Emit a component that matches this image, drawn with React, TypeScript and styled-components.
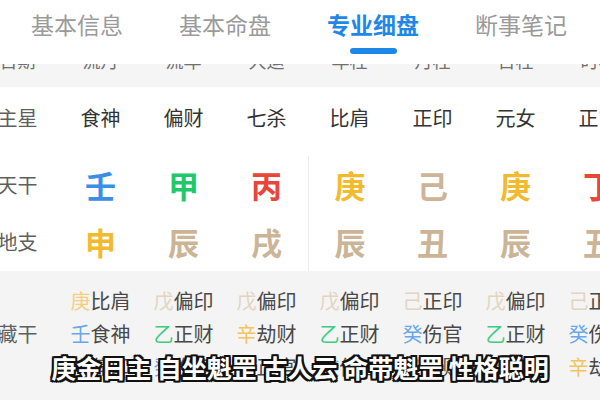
import React from "react";
import styled, { createGlobalStyle } from "styled-components";

const GlobalStyle = createGlobalStyle`
  html, body {
    margin: 0;
    padding: 0;
    background: #ffffff;
  }
  body {
    font-family: "Noto Sans CJK SC", "Noto Sans", sans-serif;
  }
`;

const Screen = styled.div`
  position: relative;
  width: 600px;
  height: 400px;
  overflow: hidden;
  background: #ffffff;
`;

const TabBar = styled.div`
  display: flex;
  height: 64px;
  padding-left: 3px;
  background: #ffffff;
`;

const Tab = styled.div<{ $active?: boolean }>`
  width: 148px;
  display: flex;
  flex-direction: column;
  align-items: center;
  padding-top: 8px;
  font-size: 23px;
  line-height: 32px;
  font-weight: ${(p) => (p.$active ? 700 : 400)};
  color: ${(p) => (p.$active ? "#1e88e8" : "#9a9a9a")};
`;

const TabLine = styled.div`
  width: 47px;
  height: 6px;
  margin-top: 8px;
  border-radius: 3px;
  background: #1e88e8;
`;

const Table = styled.div`
  margin-left: -24px;
  width: 664px;
`;

const Row = styled.div<{ $h: number; $pt?: number }>`
  display: grid;
  grid-template-columns: repeat(8, 83px);
  height: ${(p) => p.$h}px;
  padding-top: ${(p) => p.$pt ?? 0}px;
  box-sizing: border-box;
  align-items: center;
`;

const ClippedRow = styled.div`
  display: grid;
  grid-template-columns: repeat(8, 83px);
  height: 23px;
  overflow: hidden;
  background: #f5f5f5;
`;

const ClippedText = styled.div`
  margin-top: -14px;
  text-align: center;
  font-size: 18px;
  line-height: 20px;
  color: #707070;
`;

const Label = styled.div`
  text-align: center;
  font-size: 20px;
  color: #5f5f5f;
`;

const Star = styled.div`
  text-align: center;
  font-size: 20px;
  color: #333333;
`;

const Pillar = styled.div<{ $color: string; $divider?: boolean }>`
  height: 100%;
  display: flex;
  align-items: center;
  justify-content: center;
  font-size: 31px;
  font-weight: 700;
  color: ${(p) => p.$color};
  border-left: ${(p) => (p.$divider ? "1px solid #ececec" : "none")};
`;

const Hidden = styled.div`
  background: #f4f4f4;
  padding-top: 13px;
  height: 130px;
  box-sizing: border-box;
`;

const HiddenGrid = styled.div`
  display: grid;
  grid-template-columns: repeat(8, 83px);
  grid-auto-rows: 33px;
  align-items: center;
`;

const HiddenLabel = styled(Label)`
  grid-row: 2;
  grid-column: 1;
`;

const HiddenCell = styled.div`
  text-align: center;
  font-size: 20px;
  color: #484848;
  white-space: nowrap;
`;

const Stem = styled.span<{ $color: string }>`
  color: ${(p) => p.$color};
`;

const Subtitle = styled.div`
  position: absolute;
  left: 0;
  right: 0;
  bottom: 17px;
  text-align: center;
  font-size: 25px;
  font-weight: 700;
  line-height: 32px;
  color: #ffffff;
  text-shadow: -2px -2px 0 #111, 2px -2px 0 #111, -2px 2px 0 #111,
    2px 2px 0 #111, 0 -2px 0 #111, 0 2px 0 #111, -2px 0 0 #111,
    2px 0 0 #111;
`;

const STRONG: Record<string, string> = {
  壬: "#3a8ee6",
  癸: "#3a8ee6",
  甲: "#1fc86a",
  乙: "#1fc86a",
  丙: "#e8463a",
  丁: "#e8463a",
  庚: "#f2bb2f",
  辛: "#f2bb2f",
  申: "#f2bb2f",
  己: "#ccb596",
  戊: "#ccb596",
  辰: "#ccb596",
  戌: "#ccb596",
  丑: "#ccb596",
};

const SOFT: Record<string, string> = {
  庚: "#f4d07c",
  辛: "#f3c45e",
  戊: "#e3d4c0",
  己: "#e3d4c0",
  壬: "#68a7ec",
  癸: "#68a7ec",
  乙: "#3ccd82",
  丁: "#ee6a60",
};

interface Column {
  head: string;
  star: string;
  stem: string;
  branch: string;
  hidden: [string, string][];
}

const columns: Column[] = [
  { head: "流月", star: "食神", stem: "壬", branch: "申", hidden: [["庚", "比肩"], ["壬", "食神"], ["戊", "偏印"]] },
  { head: "流年", star: "偏财", stem: "甲", branch: "辰", hidden: [["戊", "偏印"], ["乙", "正财"], ["癸", "伤官"]] },
  { head: "大运", star: "七杀", stem: "丙", branch: "戌", hidden: [["戊", "偏印"], ["辛", "劫财"], ["丁", "正官"]] },
  { head: "年柱", star: "比肩", stem: "庚", branch: "辰", hidden: [["戊", "偏印"], ["乙", "正财"], ["癸", "伤官"]] },
  { head: "月柱", star: "正印", stem: "己", branch: "丑", hidden: [["己", "正印"], ["癸", "伤官"], ["辛", "劫财"]] },
  { head: "日柱", star: "元女", stem: "庚", branch: "辰", hidden: [["戊", "偏印"], ["乙", "正财"], ["癸", "伤官"]] },
  { head: "时柱", star: "正官", stem: "丁", branch: "丑", hidden: [["己", "正印"], ["癸", "伤官"], ["辛", "劫财"]] },
];

const tabs = ["基本信息", "基本命盘", "专业细盘", "断事笔记"];

const App = () => {
  return (
    <Screen>
      <GlobalStyle />
      <TabBar>
        {tabs.map((t, i) => (
          <Tab key={t} $active={i === 2}>
            {t}
            {i === 2 && <TabLine />}
          </Tab>
        ))}
      </TabBar>
      <Table>
        <ClippedRow>
          <ClippedText>日期</ClippedText>
          {columns.map((c, i) => (
            <ClippedText key={i}>{c.head}</ClippedText>
          ))}
        </ClippedRow>
        <Row $h={61}>
          <Label>主星</Label>
          {columns.map((c, i) => (
            <Star key={i}>{c.star}</Star>
          ))}
        </Row>
        <Row $h={64} $pt={8}>
          <Label>天干</Label>
          {columns.map((c, i) => (
            <Pillar key={i} $color={STRONG[c.stem]} $divider={i === 3}>
              {c.stem}
            </Pillar>
          ))}
        </Row>
        <Row $h={59}>
          <Label>地支</Label>
          {columns.map((c, i) => (
            <Pillar key={i} $color={STRONG[c.branch]} $divider={i === 3}>
              {c.branch}
            </Pillar>
          ))}
        </Row>
        <Hidden>
          <HiddenGrid>
            <HiddenLabel>藏干</HiddenLabel>
            {columns.map((c, i) =>
              c.hidden.map(([s, g], j) => (
                <HiddenCell
                  key={`${i}-${j}`}
                  style={{ gridColumn: i + 2, gridRow: j + 1 }}
                >
                  <Stem $color={SOFT[s]}>{s}</Stem>
                  {g}
                </HiddenCell>
              ))
            )}
          </HiddenGrid>
        </Hidden>
      </Table>
      <Subtitle>庚金日主 自坐魁罡 古人云 命带魁罡 性格聪明</Subtitle>
    </Screen>
  );
};

export default App;
